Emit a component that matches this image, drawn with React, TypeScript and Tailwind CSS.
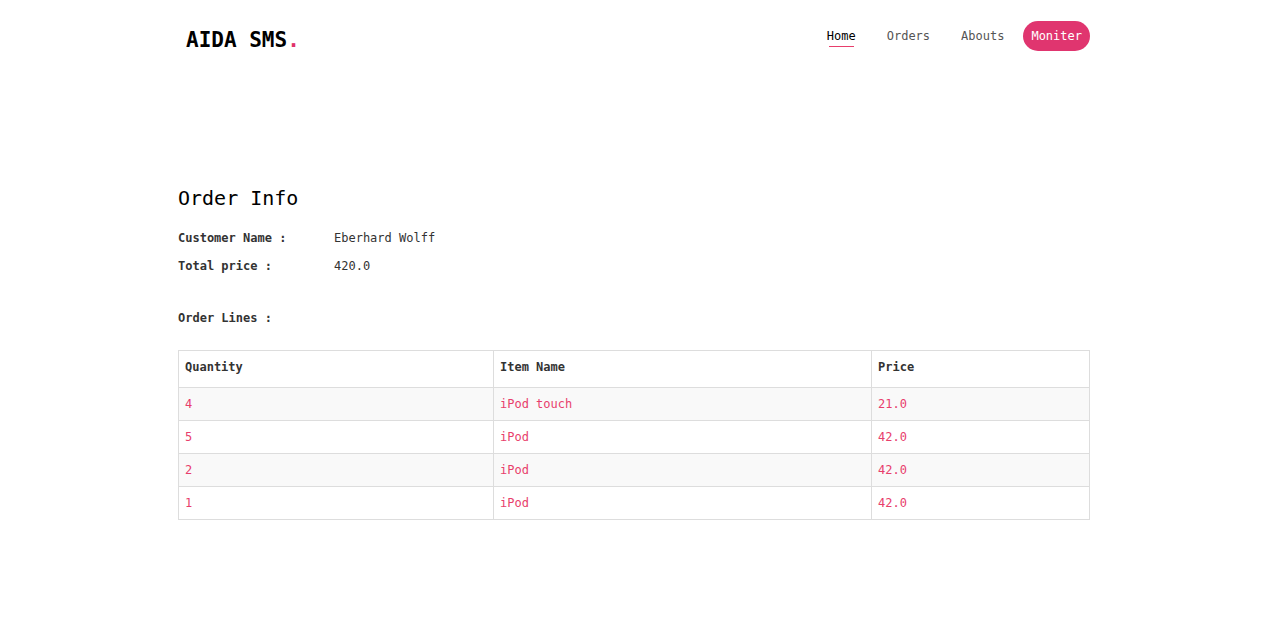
import React from "react";

const rows = [
  { q: "4", name: "iPod touch", price: "21.0" },
  { q: "5", name: "iPod", price: "42.0" },
  { q: "2", name: "iPod", price: "42.0" },
  { q: "1", name: "iPod", price: "42.0" },
];

export default function App() {
  return (
    <div
      className="min-h-screen bg-white text-[#333]"
      style={{ fontFamily: '"DejaVu Sans Mono", "Liberation Mono", monospace' }}
    >
      <header className="ml-[178px] w-[912px] pt-[21px] flex items-start justify-between">
        <div className="pl-[8px] pt-[4px] text-[21px] font-bold text-black leading-[30px]">
          AIDA SMS<span className="text-[#e0336b]">.</span>
        </div>
        <nav className="flex items-center text-[12px] leading-[30px]">
          <a className="relative text-black mr-[31px]">
            Home
            <span className="absolute left-[2px] right-[2px] bottom-[4px] h-[1px] bg-[#e83e6c]" />
          </a>
          <a className="text-[#555] mr-[31px]">Orders</a>
          <a className="text-[#555] mr-[19px]">Abouts</a>
          <a className="bg-[#e0356f] text-white rounded-full h-[30px] px-[8px] flex items-center">
            Moniter
          </a>
        </nav>
      </header>

      <main className="ml-[178px] w-[912px] pt-[131px]">
        <h1 className="text-[20px] leading-[24px] text-black">Order Info</h1>
        <div className="mt-[20px] text-[12px] leading-[16px]">
          <div className="flex">
            <span className="w-[156px] font-bold text-[#333]">Customer Name :</span>
            <span className="text-[#333]">Eberhard Wolff</span>
          </div>
          <div className="flex mt-[12px]">
            <span className="w-[156px] font-bold text-[#333]">Total price :</span>
            <span className="text-[#333]">420.0</span>
          </div>
          <div className="mt-[36px] font-bold text-[#333]">Order Lines :</div>
        </div>

        <table className="mt-[24px] w-full border-collapse border border-[#ddd] text-[12px]">
          <thead>
            <tr className="h-[37px]">
              <th className="w-[315px] border border-[#ddd] text-left font-bold px-[6px] pb-[4px] text-[#333]">Quantity</th>
              <th className="w-[378px] border border-[#ddd] text-left font-bold px-[6px] pb-[4px] text-[#333]">Item Name</th>
              <th className="border border-[#ddd] text-left font-bold px-[6px] pb-[4px] text-[#333]">Price</th>
            </tr>
          </thead>
          <tbody>
            {rows.map((r, i) => (
              <tr key={i} className={i % 2 === 0 ? "h-[33px] bg-[#f9f9f9]" : "h-[33px] bg-white"}>
                <td className="border border-[#ddd] px-[6px] text-[#e83e6c]">{r.q}</td>
                <td className="border border-[#ddd] px-[6px] text-[#e83e6c]">{r.name}</td>
                <td className="border border-[#ddd] px-[6px] text-[#e83e6c]">{r.price}</td>
              </tr>
            ))}
          </tbody>
        </table>
      </main>
    </div>
  );
}
